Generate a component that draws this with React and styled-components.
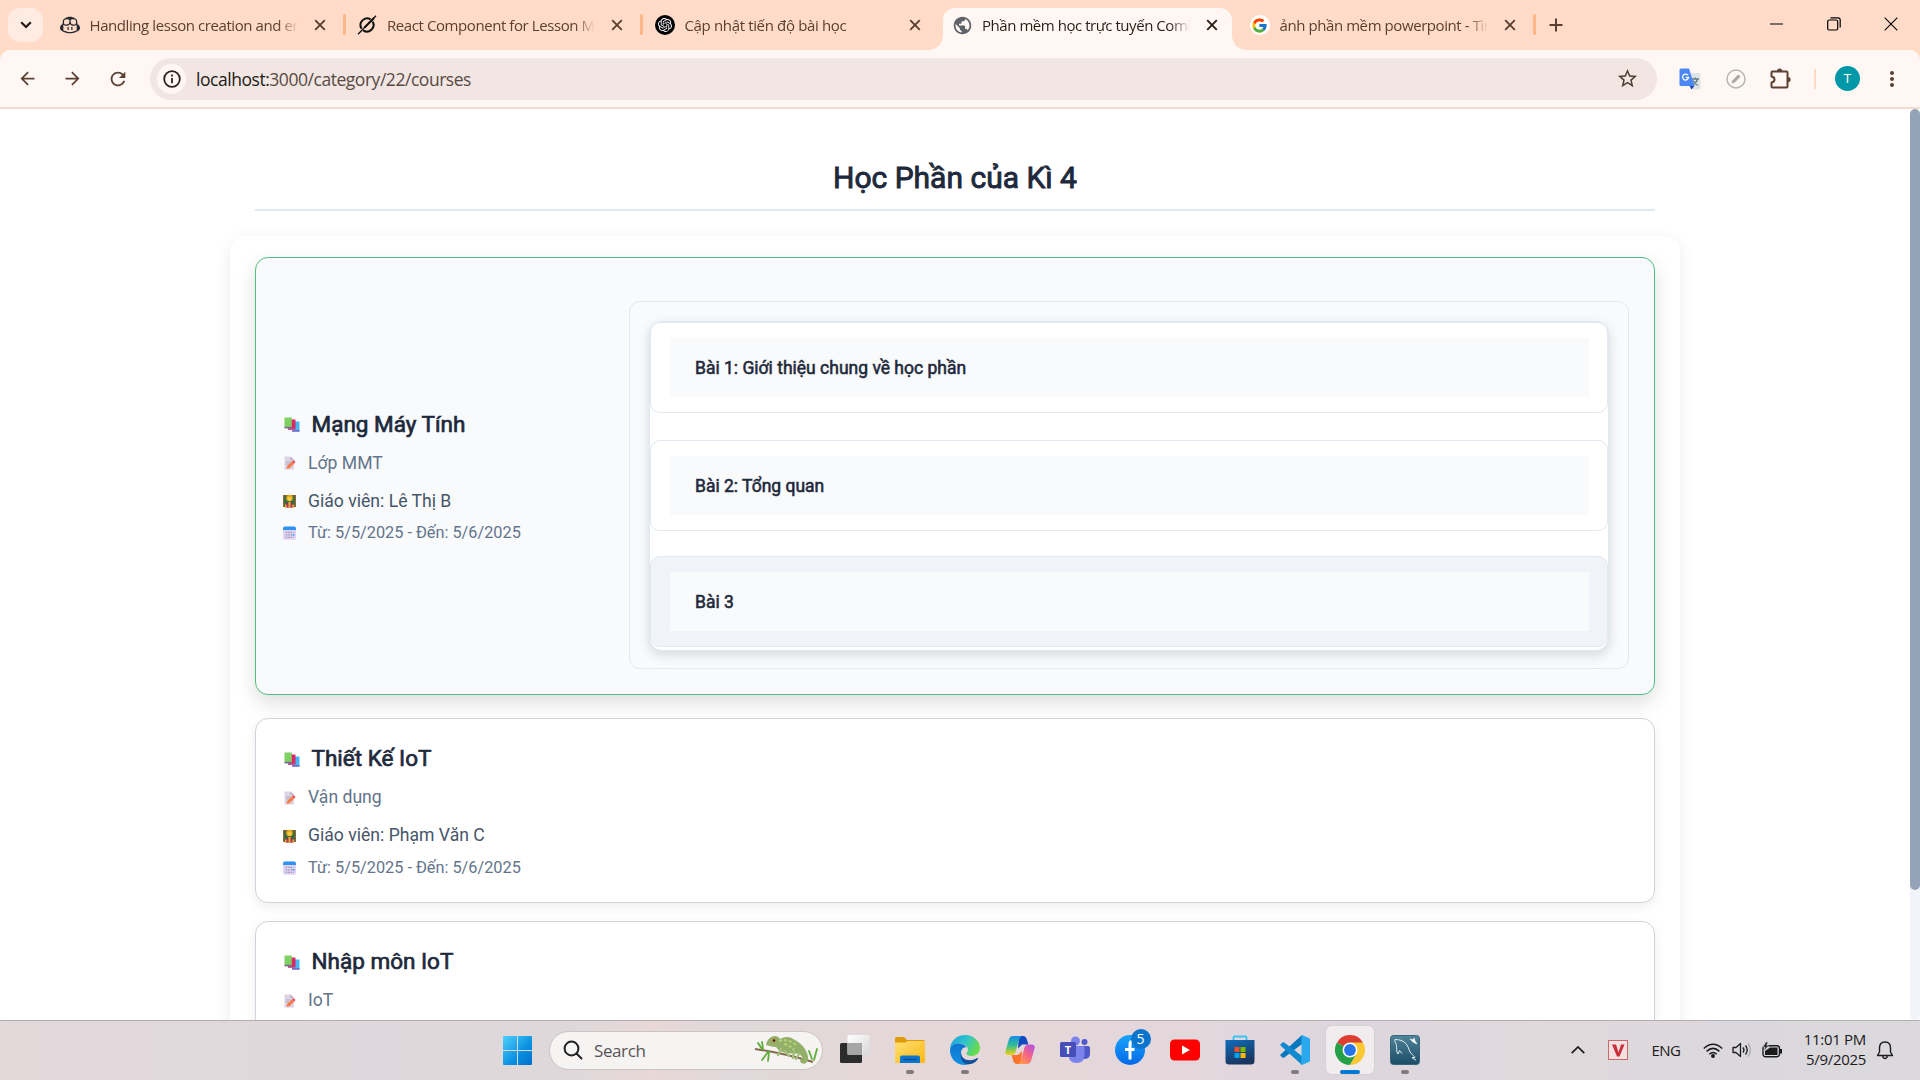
import React from 'react';
import styled, { createGlobalStyle } from 'styled-components';
import { FcGoogle } from 'react-icons/fc';
import { GoCopilot } from 'react-icons/go';
import { SiOpenai } from 'react-icons/si';
import { MdArrowBack, MdArrowForward, MdRefresh, MdStarBorder, MdPublic, MdMoreVert } from 'react-icons/md';

const GlobalStyle = createGlobalStyle`
  *, *::before, *::after { box-sizing: border-box; }
  html, body { margin: 0; padding: 0; overflow: hidden; }
  body { background: #fff; }
`;

const uiFont = `"Open Sans", "Noto Sans", sans-serif`;

/* ---------- Shell ---------- */
const Screen = styled.div`
  width: 1920px;
  height: 1080px;
  display: flex;
  flex-direction: column;
  overflow: hidden;
  font-family: ${uiFont};
`;

/* ---------- Tab strip ---------- */
const TabStrip = styled.div`
  height: 50px;
  flex: none;
  display: flex;
  padding: 8px 0 0 8px;
  background: #ffdbc8;
`;

const TabSearch = styled.button`
  width: 35px;
  height: 34px;
  margin: 0 3.5px 0 0;
  padding: 0;
  border: 0;
  border-radius: 12px;
  background: #ffebe1;
  display: grid;
  place-items: center;
`;

const Tab = styled.div`
  position: relative;
  width: 297.5px;
  height: 42px;
  display: flex;
  align-items: center;
  padding: 0 0 8px 13px;
  color: #5a4032;

  ${(p) => p.$divider && `
    &::after {
      content: "";
      position: absolute;
      right: -1.5px;
      top: 6px;
      width: 3px;
      height: 21px;
      border-radius: 2px;
      background: #ffb787;
    }
  `}
`;

const ActiveTab = styled(Tab)`
  color: #2b1d16;
  width: 289px;
  margin: 0 4.5px 0 4px;
  padding-left: 9px;
  border-radius: 12px 12px 0 0;
  background: #fff7f3;

  &::before, &::after {
    content: "";
    position: absolute;
    bottom: 0;
    width: 14px;
    height: 14px;
  }
  &::before { left: -14px; background: radial-gradient(circle at 0 0, transparent 13.5px, #fff7f3 14px); }
  &::after { right: -14px; background: radial-gradient(circle at 100% 0, transparent 13.5px, #fff7f3 14px); }
`;

const Favicon = styled.span`
  width: 20px;
  height: 20px;
  flex: none;
  display: grid;
  place-items: center;
`;

const RoundIcon = styled(Favicon)`
  border-radius: 50%;
  background: ${(p) => p.$bg};
`;

const TabTitle = styled.span`
  width: 208px;
  margin-left: 10px;
  flex: none;
  overflow: hidden;
  white-space: nowrap;
  font-size: 15px;
  line-height: 24px;
  letter-spacing: ${(p) => p.$track || -0.42}px;
  mask-image: linear-gradient(to right, #000 188px, transparent 208px);
`;

const CloseTab = styled.span`
  width: 20px;
  margin-left: 12px;
  display: grid;
  place-items: center;
`;

const NewTab = styled.span`
  width: 43px;
  height: 34px;
  display: grid;
  place-items: center;
`;

const WindowButtons = styled.div`
  margin: -8px 1px 0 auto;
  height: 50px;
  display: flex;
  span { width: 57px; height: 48px; display: grid; place-items: center; }
`;

/* ---------- Toolbar ---------- */
const ToolbarBack = styled.div`
  flex: none;
  background: #ffdbc8;
`;

const Toolbar = styled.div`
  height: 59px;
  display: flex;
  align-items: center;
  padding: 0 0 0 5px;
  border-bottom: 2px solid #f5dccf;
  border-radius: 10px 10px 0 0;
  background: #fff7f3;
  color: #5b4133;
`;

const ToolButton = styled.span`
  width: ${(p) => p.$w || 45}px;
  height: 40px;
  flex: none;
  display: grid;
  place-items: center;
`;

const AddressBar = styled.div`
  width: 1507px;
  height: 42px;
  flex: none;
  margin-left: 10px;
  display: flex;
  align-items: center;
  padding: 0 18px 0 7px;
  border-radius: 21px;
  background: #f2e6e3;
`;

const SiteInfo = styled.span`
  width: 29px;
  height: 30px;
  border-radius: 50%;
  background: #fff7f3;
  display: grid;
  place-items: center;
`;

const Url = styled.span`
  flex: 1;
  margin-left: 10px;
  font-size: 17.5px;
  line-height: 26px;
  letter-spacing: -0.46px;
  color: #594a45;
  b { font-weight: 400; color: #221a17; }
`;

const ToolDivider = styled.span`
  flex: none;
  width: 2px;
  height: 20px;
  margin-right: 19px;
  background: #ffdbc8;
`;

const Avatar = styled.span`
  flex: none;
  width: 25px;
  height: 25px;
  border-radius: 50%;
  display: grid;
  place-items: center;
  background: #0097a7;
  color: #fff;
  font: 400 13px Roboto, sans-serif;
`;

/* ---------- Page ---------- */
const Viewport = styled.div`
  height: 911px;
  flex: none;
  display: flex;
  overflow: hidden;
  background: #fff;
  font-family: Roboto, sans-serif;
`;

const Page = styled.main`
  width: 1910px;
  padding: 48px 230px 0;
`;

const ScrollTrack = styled.div`
  width: 10px;
  border-radius: 5px;
  background: #f1f5f9;
`;

const ScrollThumb = styled.div`
  height: 781px;
  border-radius: 5px;
  background: #94a3b8;
`;

const Heading = styled.h1`
  margin: 0 25px 25px;
  height: 54px;
  border-bottom: 2px solid #e2e8f0;
  text-align: center;
  font-size: 30px;
  line-height: 42px;
  font-weight: 400;
  color: #1e293b;
  -webkit-text-stroke: 0.9px #1e293b;
`;

const CourseList = styled.section`
  height: 1000px;
  padding: 21px 25px;
  border-radius: 16px;
  background: #fff;
  box-shadow: 0 4px 16px rgba(0, 0, 0, 0.08);
`;

const Card = styled.article`
  display: flex;
  align-items: center;
  height: ${(p) => (p.$open ? 438 : 185)}px;
  margin-bottom: ${(p) => (p.$open ? 23 : 18)}px;
  padding: 0 25px 0 27px;
  border: 1px solid ${(p) => (p.$open ? '#50bd80' : '#d0d3dc')};
  border-radius: 13px;
  background: ${(p) => (p.$open ? '#f8fafc' : '#fff')};
  box-shadow: ${(p) => (p.$open ? '0 8px 20px rgba(0,0,0,.13)' : '0 4px 12px rgba(0,0,0,.07)')};
`;

const Info = styled.div`
  width: 346px;
  flex: none;
  padding-bottom: 3px;
`;

const Line = styled.div`
  display: flex;
  align-items: center;
  height: ${(p) => p.$h}px;
  font-size: ${(p) => p.$size}px;
  color: ${(p) => p.$color};
  white-space: nowrap;
  svg { flex: none; margin: 1px 11px 0 -1px; }
`;

const CourseName = styled(Line)`
  -webkit-text-stroke: 0.7px #1e293b;
  svg { margin: 2px 12px 0 0.5px; }
`;

const LessonPanel = styled.div`
  width: 1000px;
  height: 368px;
  margin-top: 17px;
  padding: 19px 19px 0;
  border: 1px solid #e2e8f0;
  border-radius: 11px;
`;

const Lessons = styled.div`
  height: 330px;
  border: 1px solid #e2e8f0;
  border-radius: 13px;
  background: #fff;
  box-shadow: 0 4px 12px rgba(15, 23, 42, 0.14);
`;

const Lesson = styled.div`
  height: 91px;
  margin-bottom: ${(p) => p.$gap || 0}px;
  padding: 15px 18px 0 19px;
  border: 1px solid #e2e8f0;
  border-radius: 10px;
  background: ${(p) => (p.$hover ? '#f0f4f9' : '#fff')};
`;

const LessonTitle = styled.div`
  height: 59px;
  padding-left: 25px;
  background: #f8fafc;
  color: #1e293b;
  font-size: 17.5px;
  line-height: 61px;
  -webkit-text-stroke: 0.55px #1e293b;
`;

/* ---------- Taskbar ---------- */
const Taskbar = styled.footer`
  height: 60px;
  flex: none;
  display: flex;
  align-items: center;
  padding-bottom: 1px;
  border-top: 1px solid #b3aeb1;
  background: linear-gradient(90deg, #e3d8da 0, #ded8dc 20%, #dfd8da 30%, #e8d8d7 34%, #e0d8da 38%, #e6d7d8 50%, #e3d7dc 62%, #ddd6dd 72%, #e1d9dc 80%, #dbd8dd 90%, #dcd9dd 100%);
`;

const StartButton = styled.span`
  flex: none;
  margin-left: 503px;
  width: 29px;
  height: 29px;
`;

const SearchBox = styled.div`
  flex: none;
  width: 274px;
  height: 39px;
  margin: 0 7.5px 0 17px;
  padding: 0 2px 0 13px;
  display: flex;
  align-items: center;
  border: 1px solid #cbc4c6;
  border-radius: 20px;
  background: #f6f3f3;
  font-size: 17px;
  letter-spacing: -0.4px;
  color: #555;
  span { flex: 1; margin-left: 11px; }
`;

const TaskButton = styled.div`
  position: relative;
  flex: none;
  width: 48px;
  height: 48px;
  margin-right: 7px;
  display: grid;
  place-items: center;
  border-radius: 5px;
  background: ${(p) => (p.$active ? '#f1ecee' : 'transparent')};
  box-shadow: ${(p) => (p.$active ? '0 0 1px rgba(0,0,0,.25)' : 'none')};

  > svg { margin-top: -1px; }

  ${(p) => (p.$running || p.$active) && `
    &::after {
      content: "";
      position: absolute;
      bottom: 0;
      left: calc(50% - ${p.$active ? 10 : 4}px);
      width: ${p.$active ? 20 : 8}px;
      height: 4px;
      border-radius: 2px;
      background: ${p.$active ? '#0078d4' : '#807b7e'};
    }
  `}
`;

const Badge = styled.span`
  position: absolute;
  left: 25px;
  top: 3px;
  width: 20px;
  height: 20px;
  border-radius: 50%;
  background: #0b74cf;
  color: #fff;
  text-align: center;
  font-size: 14px;
  line-height: 20px;
`;

const Tray = styled.div`
  margin-left: auto;
  display: flex;
  align-items: center;
  padding-right: 16px;
  color: #1b1b1b;
`;

const TrayCell = styled.span`
  width: ${(p) => p.$w}px;
  display: grid;
  place-items: center;
  font-size: 15px;
  letter-spacing: -0.5px;
`;

const Clock = styled.div`
  width: 76px;
  margin-top: -3px;
  text-align: right;
  font-size: 15px;
  line-height: 20px;
  letter-spacing: -0.3px;
  white-space: nowrap;
`;

/* ---------- Drawings ---------- */
const X = () => (
  <svg width="12" height="12" viewBox="0 0 12 12" stroke="currentColor" strokeWidth="1.9"><path d="M1.2 1.2l9.6 9.6M10.8 1.2l-9.6 9.6" /></svg>
);

const GrokIcon = () => (
  <svg width="20" height="20" viewBox="0 0 20 20" fill="none" stroke="#111" strokeWidth="2">
    <path d="M13.6 4.4A6.6 6.6 0 0 0 4.6 13.6M6.2 15.4A6.6 6.6 0 0 0 15.6 6.6" />
    <path d="M1 19.2L19 .8" strokeWidth="1.3" /><path d="M7.5 12.5L17 3" strokeWidth="2" />
  </svg>
);

const TranslateIcon = () => (
  <svg width="22" height="22" viewBox="0 0 22 22">
    <path d="M9 5h11.500q1 0 1 1v14.500q0 1-1 1H13z" fill="#dfe3e6" />
    <path d="M12 11h8M16 9.500v1.500M18.500 11q-1 4-5 6M14 12.500q2 4 5 5" stroke="#607d8b" strokeWidth="1.300" fill="none" />
    <path d="M10.500 18h5l-3 3.500z" fill="#2447b9" />
    <path d="M2 .500h8l5.500 17.500H2q-1.500 0-1.500-1.500V2Q.500.500 2 .500z" fill="#4a87f4" />
    <path d="M9 7.200A3 3 0 1 0 9.600 9.500H6.800" stroke="#fff" strokeWidth="1.300" fill="none" />
  </svg>
);

const PenCircle = () => (
  <svg width="20" height="20" viewBox="0 0 20 20" fill="none">
    <circle cx="10" cy="10" r="9" stroke="#b5b1b0" strokeWidth="1.400" />
    <path d="M5.500 14.500l1-3.300 5.700-5.700 2.300 2.300-5.700 5.700z" fill="#aaa7a6" />
  </svg>
);

const PuzzleIcon = () => (
  <svg width="22" height="22" viewBox="0 0 22 22">
    <path d="M2.500 3.500h14q1 0 1 1v14q0 1-1 1h-14q-1 0-1-1v-4q3-.5 3-3t-3-3v-4q0-1 1-1z" fill="none" stroke="#5b4133" strokeWidth="2" strokeLinejoin="round" />
    <path d="M7 3a2.600 2.600 0 0 1 5.200 0zM18 9a2.600 2.600 0 0 1 0 5.200z" fill="#5b4133" />
  </svg>
);

const Books = () => (
  <svg width="16" height="15" viewBox="0 0 16 15">
    <path d="M8.500 4.500h7v10h-7z" fill="#45b8f2" /><path d="M8 13h7.500v1.700H8z" fill="#7868c9" />
    <path d="M4 2.500h7.500v9.800H4z" fill="#dc2864" /><path d="M4 11.300h6.500v1.600H4z" fill="#b85590" />
    <path d="M.500.500h7.300v10H.500z" fill="#80cf63" /><path d="M.500 9.800h7v1.600h-7z" fill="#79698f" />
  </svg>
);

const Memo = () => (
  <svg width="15" height="14" viewBox="0 0 15 14">
    <path d="M2.500.500H8.500L12 4v9.500H2.500z" fill="#dcd3e3" /><path d="M8.500.500V4H12z" fill="#b9aec4" />
    <path d="M4 6h5M4 8h4" stroke="#afa3bb" strokeWidth=".8" />
    <path d="M4.500 13l.7-3L10 5.500l2.300 2L7.500 12.300z" fill="#fb7b48" /><path d="M10 5.500L11.500 4l2 2-1.200 1.600z" fill="#e64c62" />
  </svg>
);

const Teacher = () => (
  <svg width="15" height="14" viewBox="0 0 15 14">
    <path d="M1.700 1.500h11.600v11H1.700z" fill="#35703f" stroke="#8a5a30" strokeWidth="1.200" />
    <circle cx="7.500" cy="4" r="3.300" fill="#e9a91c" /><circle cx="7.500" cy="4.800" r="1.900" fill="#ffcb4a" />
    <path d="M3 13.500q0-5.500 4.500-5.500t4.500 5.500z" fill="#7b3a5c" /><path d="M6.300 8h2.400v5.500H6.300z" fill="#e3a93c" />
    <path d="M3 10.500h1.500v3H3zM10.500 10.500H12v3h-1.500z" fill="#f0b52c" /><path d="M5 10.500h1.300v3H5zM8.700 10.500H10v3H8.700z" fill="#d92b4e" />
  </svg>
);

const Calendar = () => (
  <svg width="15" height="14" viewBox="0 0 15 14">
    <rect x="1" y=".5" width="13" height="13.200" rx="2" fill="#dfd3f1" />
    <path d="M1 4V2.500Q1 .500 3 .500h9q2 0 2 2V4z" fill="#2d93f5" />
    <path d="M3.800 6.300h7.800M3.800 8.800h7.800M3.800 11.300h7.800" stroke="#9793b8" strokeWidth="1.300" strokeDasharray="1.400 1" /><path d="M10.700 8h1.600v1.600h-1.600z" fill="#3598f4" />
  </svg>
);

const Start = () => (
  <svg width="29" height="29" viewBox="0 0 29 29">
    <defs><linearGradient id="win" x1="0" y1="0" x2="1" y2="1"><stop stopColor="#4fd0fc" /><stop offset=".6" stopColor="#0a90e0" /><stop offset="1" stopColor="#006fcd" /></linearGradient></defs>
    <path d="M1 0h13v14H0V1Q0 0 1 0zM15 0h13q1 0 1 1v13H15zM0 15h14v14H1q-1 0-1-1zM15 15h14v13q0 1-1 1H15z" fill="url(#win)" />
  </svg>
);

const Chameleon = () => (
  <svg width="66" height="30" viewBox="0 0 66 30" fill="none">
    <path d="M1 14q28 4 58 13" stroke="#83684a" strokeWidth="2" />
    <path d="M8 14L4 8M9 14L8 7M14 17l-6 8M15 17l-1 9M60 25l3-11M58 24l-3-8" stroke="#5fae3c" strokeWidth="1.800" strokeLinecap="round" />
    <path d="M12 10Q13 3 20 1q4-.5 6 3Q34-.5 41 5q9 5 12 13 3 8-2 10.500-4 1-5-2.500 0-3 3-2.500-2-5-8-5Q26 19 22 12q-4 0-10-2z" fill="#93b069" />
    <path d="M25 6q10-3 18 5M30 9q6 1 10 6" stroke="#b5d377" strokeWidth="2" strokeDasharray="3 2" />
    <path d="M27 14l-3 6M31 16l4 5M40 17l-1 6M45 19l-3 5" stroke="#a3be7c" strokeWidth="2.400" strokeLinecap="round" />
    <circle cx="20" cy="5.500" r="2.500" fill="#b99658" /><circle cx="20" cy="5.500" r="1.200" fill="#2e2415" />
  </svg>
);

const TaskView = () => (
  <svg width="30" height="29" viewBox="0 0 30 29">
    <defs><linearGradient id="tv" x1="0" y1="0" x2="1" y2="1"><stop stopColor="#fff" /><stop offset="1" stopColor="#d8d8d8" /></linearGradient></defs>
    <rect y="8" width="22" height="20" rx="1.500" fill="#2d2c2c" /><rect x="7.500" y="0" width="22" height="20" rx="1.500" fill="url(#tv)" />
    <path d="M7.500 8H22v12H9q-1.500 0-1.500-1.500z" fill="#a5a5a5" />
  </svg>
);

const Folder = () => (
  <svg width="30" height="28" viewBox="0 0 30 28">
    <defs><linearGradient id="fo" x1="0" y1="0" x2="1" y2="1"><stop stopColor="#ffdf77" /><stop offset="1" stopColor="#fbb80e" /></linearGradient></defs>
    <path d="M1.500 1H9l3 3h16.500Q30 4 30 5.500V10H0V2.500Q0 1 1.500 1z" fill="#df9b06" />
    <path d="M0 6.500h10L12.500 5H30v20.500q0 1.500-1.500 1.500h-27Q0 27 0 25.500z" fill="url(#fo)" />
    <path d="M5 27v-5.500Q5 19.500 7 19.500h16q2 0 2 2V27z" fill="#0d76cc" /><path d="M9 23.500h12" stroke="#08508f" strokeWidth="1.400" strokeLinecap="round" />
  </svg>
);

const Edge = () => (
  <svg width="30" height="30" viewBox="0 0 30 30">
    <defs>
      <linearGradient id="e1" x1="0" y1="0" x2="1" y2=".4"><stop stopColor="#1b9fe0" /><stop offset=".55" stopColor="#2fc4cc" /><stop offset="1" stopColor="#67db50" /></linearGradient>
      <linearGradient id="e2" x1="0" y1="0" x2="0" y2="1"><stop stopColor="#0d75d2" /><stop offset="1" stopColor="#1490df" /></linearGradient>
    </defs>
    <path d="M0 15C0 6 7 0 15 0c9 0 15 6.500 15 13 0 5-4 8-8.500 8-3 0-5-1-5-2.500 0-1 1.500-1.500 1.500-4C18 11 14 8.500 10 8.500 5 8.500 1 11 0 15z" fill="url(#e1)" />
    <path d="M0 15c.5-4 4.500-7 9.500-6.500 3.500.3 6 2 7.500 4-3-1-6 1.500-6 5.500 0 5 5 9.500 10 9.500-2 1.500-4 2.500-7 2.500C5 29.500 0 22.500 0 15z" fill="url(#e2)" />
    <path d="M11 17.500c0 6 6 8.500 11 7.500 2-.4 3.500-1 5-2 .8-.4 1.400.3 1 1-3 5-9.500 6.500-13 4.500-4-2.500-5-7-4-11z" fill="#10529b" />
  </svg>
);

const Copilot = () => (
  <svg width="30" height="28" viewBox="0 0 30 28">
    <defs>
      <linearGradient id="c1" x1="0" y1="0" x2="0" y2="1"><stop stopColor="#168fe8" /><stop offset=".5" stopColor="#33bd91" /><stop offset="1" stopColor="#f5d20c" /></linearGradient>
      <linearGradient id="c2" x1="1" y1="0" x2=".2" y2="1"><stop stopColor="#a750ef" /><stop offset=".5" stopColor="#f3628c" /><stop offset="1" stopColor="#ff9b4a" /></linearGradient>
    </defs>
    <path d="M14 0h4q3 0 4 4l1.500 4.500H17l-4 4z" fill="#1148bd" />
    <path d="M8 0h9q-2 1-3 4l-3.500 12q-1 3-4 3H3.500q-4 0-3-4L4 3q1-3 4-3z" fill="url(#c1)" />
    <path d="M16 28h-4q-3 0-4-4l-1.500-5H13l4-4z" fill="#f8742d" />
    <path d="M22 28h-9q2-1 3-4l3.500-12.500q1-3 4-3h3q4 0 3 4L26 25q-1 3-4 3z" fill="url(#c2)" />
  </svg>
);

const Letter = styled.text`
  font: 700 11px ${uiFont};
  fill: #fff;
  text-anchor: middle;
`;

const Teams = () => (
  <svg width="30" height="28" viewBox="0 0 30 28">
    <circle cx="24.500" cy="6" r="3" fill="#5059c9" /><path d="M20 10h8q2 0 2 2v6q0 4.500-5 5h-5z" fill="#5059c9" />
    <circle cx="15.500" cy="5" r="4.500" fill="#7b83eb" /><path d="M9 10h14q1.500 0 1.500 1.500V19q0 8-8 8T9 19z" fill="#7b83eb" />
    <rect y="6" width="16" height="15" rx="1.500" fill="#464eb8" /><Letter x="8" y="17.500">T</Letter>
  </svg>
);

const Facebook = () => (
  <svg width="30" height="30" viewBox="0 0 30 30">
    <defs><linearGradient id="fb" x1="0" y1="0" x2="0" y2="1"><stop stopColor="#18a5fb" /><stop offset="1" stopColor="#0668e8" /></linearGradient></defs>
    <circle cx="15" cy="15" r="15" fill="url(#fb)" />
    <path d="M18.500 6.500h-1q-2.500 0-2.500 2.500v15.500M10 14.500h9.500" stroke="#fff" strokeWidth="3" fill="none" />
  </svg>
);

const YouTube = () => (
  <svg width="30" height="30" viewBox="0 0 30 30"><rect y="4.500" width="30" height="21" rx="4.500" fill="#f00" /><path d="M12 10.500v9l8-4.500z" fill="#fff" /></svg>
);

const Store = () => (
  <svg width="30" height="30" viewBox="0 0 30 30">
    <defs><linearGradient id="st" x1="0" y1="0" x2=".4" y2="1"><stop stopColor="#0f6dbb" /><stop offset="1" stopColor="#1a3560" /></linearGradient></defs>
    <path d="M8.500 7V2.500Q8.500 1.500 9.500 1.500h11q1 0 1 1V7" stroke="#3bc2f5" strokeWidth="1.800" fill="none" />
    <path d="M.500 5h29v21q0 3.500-3.500 3.500H4Q.500 29.500.500 26z" fill="url(#st)" />
    <path d="M9.500 12h5v5h-5z" fill="#f25022" /><path d="M15.500 12h5v5h-5z" fill="#7fba00" /><path d="M9.500 18h5v5h-5z" fill="#00a4ef" /><path d="M15.500 18h5v5h-5z" fill="#ffb900" />
  </svg>
);

const VsCode = () => (
  <svg width="30" height="30" viewBox="0 0 30 30">
    <path d="M22 0L1 19q-1.200 1-.2 2l1.700 1.500q.8.700 1.800 0L22 9z" fill="#0878be" />
    <path d="M22 30L1 11q-1.200-1-.2-2l1.700-1.500q.8-.7 1.800 0L22 21z" fill="#1089cf" />
    <path d="M22 0l7 3q1 .5 1 1.500v21q0 1-1 1.500l-7 3q-.5-.2-.5-1V1q0-.8.500-1z" fill="#2ba9ee" />
  </svg>
);

const Chrome = () => (
  <svg width="30" height="30" viewBox="0 0 30 30">
    <path d="M15 15L2 7.500A15 15 0 0 1 28 7.500z" fill="#dc3f32" />
    <path d="M2 7.500A15 15 0 0 0 15 30l6.500-11.300L15 15z" fill="#24a148" />
    <path d="M28 7.500A15 15 0 0 1 15 30l6.500-11.200L15 7.500z" fill="#fcc934" />
    <circle cx="15" cy="15" r="7.500" fill="#fff" /><circle cx="15" cy="15" r="5.900" fill="#2675e8" />
  </svg>
);

const MySql = () => (
  <svg width="30" height="30" viewBox="0 0 30 30" fill="none">
    <defs><linearGradient id="my" x1="0" y1="0" x2="0" y2="1"><stop stopColor="#4f8499" /><stop offset="1" stopColor="#1c4d67" /></linearGradient></defs>
    <rect x=".5" y=".5" width="29" height="29" rx="3" fill="url(#my)" stroke="#376579" />
    <path d="M5 4.500c7 0 12 3 14 10 1 4 4 5 6 8l-3 .2 4 2.500M5 4.500c-1 2 1 3 1.500 6s-.5 6 1.500 8.500l1.500-3.500 2.500 3" stroke="#dfecf1" strokeWidth="1" />
    <path d="M20 4l3 1 1-2 1 3 2 3-4-2z" fill="#fff" stroke="#fff" strokeWidth=".6" />
  </svg>
);

/* ---------- Data ---------- */
const courses = [
  { name: 'Mạng Máy Tính', about: 'Lớp MMT', teacher: 'Lê Thị B', lessons: ['Bài 1: Giới thiệu chung về học phần', 'Bài 2: Tổng quan', 'Bài 3'] },
  { name: 'Thiết Kế IoT', about: 'Vận dụng', teacher: 'Phạm Văn C' },
  { name: 'Nhập môn IoT', about: 'IoT', teacher: 'Lê Thị B' },
];

const lessonGaps = [27, 25, 0];

const CourseCard = ({ course }) => (
  <Card $open={!!course.lessons}>
    <Info>
      <CourseName $h={40} $size={22.5} $color="#1e293b"><Books />{course.name}</CourseName>
      <Line $h={38} $size={17.6} $color="#64748b"><Memo />{course.about}</Line>
      <Line $h={38} $size={17.6} $color="#475569"><Teacher />Giáo viên: {course.teacher}</Line>
      <Line $h={26} $size={16.3} $color="#64748b"><Calendar />Từ: 5/5/2025 - Đến: 5/6/2025</Line>
    </Info>
    {course.lessons && (
      <LessonPanel>
        <Lessons>
          {course.lessons.map((title, i) => (
            <Lesson key={title} $gap={lessonGaps[i]} $hover={i === 2}><LessonTitle>{title}</LessonTitle></Lesson>
          ))}
        </Lessons>
      </LessonPanel>
    )}
  </Card>
);

export default function App() {
  return (
    <Screen>
      <GlobalStyle />
      <TabStrip>
        <TabSearch><svg width="12" height="8" viewBox="0 0 12 8" fill="none" stroke="#241914" strokeWidth="2.200"><path d="M1.200 1.200L6 6l4.800-4.800" /></svg></TabSearch>
        <Tab $divider>
          <Favicon><GoCopilot size={20} color="#24292f" /></Favicon>
          <TabTitle>Handling lesson creation and error</TabTitle>
          <CloseTab><X /></CloseTab>
        </Tab>
        <Tab $divider>
          <Favicon><GrokIcon /></Favicon>
          <TabTitle>React Component for Lesson Management</TabTitle>
          <CloseTab><X /></CloseTab>
        </Tab>
        <Tab>
          <RoundIcon $bg="#000"><SiOpenai size={14} color="#fff" /></RoundIcon>
          <TabTitle $track={-0.35}>Cập nhật tiến độ bài học</TabTitle>
          <CloseTab><X /></CloseTab>
        </Tab>
        <ActiveTab>
          <Favicon><MdPublic size={21} color="#5f6368" /></Favicon>
          <TabTitle $track={-0.45}>Phần mềm học trực tuyến Combo</TabTitle>
          <CloseTab><X /></CloseTab>
        </ActiveTab>
        <Tab $divider>
          <RoundIcon $bg="#fff"><FcGoogle size={17} /></RoundIcon>
          <TabTitle>ảnh phần mềm powerpoint - Tìm kiếm</TabTitle>
          <CloseTab><X /></CloseTab>
        </Tab>
        <NewTab><svg width="14" height="14" viewBox="0 0 14 14" stroke="#5a4032" strokeWidth="2"><path d="M7 .500v13M.500 7h13" /></svg></NewTab>
        <WindowButtons>
          <span><svg width="13" height="2" viewBox="0 0 13 2"><path d="M0 .500h13v1H0z" /></svg></span>
          <span><svg width="14" height="14" viewBox="0 0 14 14" fill="none" stroke="#000" strokeWidth="1.200"><rect x=".7" y="3" width="10" height="10" rx="1.500" /><path d="M3.500.800H11q2.200 0 2.200 2.200v7.500" /></svg></span>
          <span><svg width="14" height="14" viewBox="0 0 14 14" stroke="#000" strokeWidth="1.100"><path d="M.700.700l12.600 12.600M13.300.700L.700 13.300" /></svg></span>
        </WindowButtons>
      </TabStrip>

      <ToolbarBack>
        <Toolbar>
          <ToolButton><MdArrowBack size={21} /></ToolButton>
          <ToolButton><MdArrowForward size={21} /></ToolButton>
          <ToolButton><MdRefresh size={22} /></ToolButton>
          <AddressBar>
            <SiteInfo><svg width="18" height="18" viewBox="0 0 18 18" fill="none" stroke="#2c211d" strokeWidth="1.800"><circle cx="9" cy="9" r="7.800" /><path d="M9 8v5.200M9 4.600v1.900" /></svg></SiteInfo>
            <Url><b>localhost:</b>3000/category/22/courses</Url>
            <MdStarBorder size={23} color="#4d4039" />
          </AddressBar>
          <ToolButton $w={66}><TranslateIcon /></ToolButton>
          <ToolButton $w={25}><PenCircle /></ToolButton>
          <ToolButton $w={66}><PuzzleIcon /></ToolButton>
          <ToolDivider />
          <Avatar>T</Avatar>
          <ToolButton $w={64}><MdMoreVert size={24} /></ToolButton>
        </Toolbar>
      </ToolbarBack>

      <Viewport>
        <Page>
          <Heading>Học Phần của Kì 4</Heading>
          <CourseList>
            {courses.map((c) => <CourseCard key={c.name} course={c} />)}
          </CourseList>
        </Page>
        <ScrollTrack><ScrollThumb /></ScrollTrack>
      </Viewport>

      <Taskbar>
        <StartButton><Start /></StartButton>
        <SearchBox>
          <svg width="20" height="20" viewBox="0 0 20 20" fill="none" stroke="#222" strokeWidth="2"><circle cx="8.500" cy="8.500" r="6.900" /><path d="M13.500 13.500l5 5" strokeLinecap="round" /></svg>
          <span>Search</span>
          <Chameleon />
        </SearchBox>
        <TaskButton><TaskView /></TaskButton>
        <TaskButton $running><Folder /></TaskButton>
        <TaskButton $running><Edge /></TaskButton>
        <TaskButton><Copilot /></TaskButton>
        <TaskButton><Teams /></TaskButton>
        <TaskButton><Facebook /><Badge>5</Badge></TaskButton>
        <TaskButton><YouTube /></TaskButton>
        <TaskButton><Store /></TaskButton>
        <TaskButton $running><VsCode /></TaskButton>
        <TaskButton $active><Chrome /></TaskButton>
        <TaskButton $running><MySql /></TaskButton>
        <Tray>
          <TrayCell $w={44}><svg width="14" height="8" viewBox="0 0 14 8" fill="none" stroke="#1b1b1b" strokeWidth="1.700"><path d="M.700 7.200L7 1l6.300 6.200" /></svg></TrayCell>
          <TrayCell $w={36}><svg width="20" height="20" viewBox="0 0 20 20"><rect x=".5" y=".5" width="19" height="19" fill="#f4e0e0" stroke="#c46c6c" /><path d="M4 4.500h4l2.500 8 2.500-8h3.500l-5 12h-2.500z" fill="#c8313b" /></svg></TrayCell>
          <TrayCell $w={60}>ENG</TrayCell>
          <TrayCell $w={34}><svg width="20" height="15" viewBox="0 0 20 15" fill="none" stroke="#1b1b1b" strokeWidth="1.500"><path d="M.800 5.500q9.200-8.500 18.400 0M3.600 8.400q6.400-6 12.800 0M6.300 11.200q3.700-3.500 7.400 0" /><circle cx="10" cy="13" r="1.200" fill="#1b1b1b" /></svg></TrayCell>
          <TrayCell $w={24}><svg width="20" height="16" viewBox="0 0 20 16" fill="none" stroke="#1b1b1b" strokeWidth="1.300"><path d="M1 5.500h3L8.500 1.500v13L4 10.500H1z" strokeLinejoin="round" /><path d="M11 5.500q2 2.500 0 5M13.500 3.500q3.500 4.500 0 9" /><path d="M16 1.500q5 6.500 0 13" stroke="#aaa" /></svg></TrayCell>
          <TrayCell $w={36}><svg width="20" height="16" viewBox="0 0 20 16"><rect x="1" y="3.700" width="16.500" height="11" rx="2.500" fill="none" stroke="#1b1b1b" strokeWidth="1.400" /><path d="M3 9l5-3.500h7.500v7.500H3z" fill="#1b1b1b" /><path d="M18 7h2v4.500h-2z" fill="#1b1b1b" /><path d="M4 0L1 5h2L2 9l4.500-5.500h-2L6 0z" fill="#1b1b1b" stroke="#dcd8dd" strokeWidth=".5" /></svg></TrayCell>
          <Clock>11:01 PM<br />5/9/2025</Clock>
          <TrayCell $w={38}><svg width="18" height="19" viewBox="0 0 18 19" fill="none" stroke="#1b1b1b" strokeWidth="1.400" strokeLinejoin="round"><path d="M9 1Q3.500 1 3.500 7v4L1.500 14.500h15L14.500 11V7Q14.500 1 9 1zM6.800 15q.2 2.500 2.200 2.500t2.200-2.500" /></svg></TrayCell>
        </Tray>
      </Taskbar>
    </Screen>
  );
}
